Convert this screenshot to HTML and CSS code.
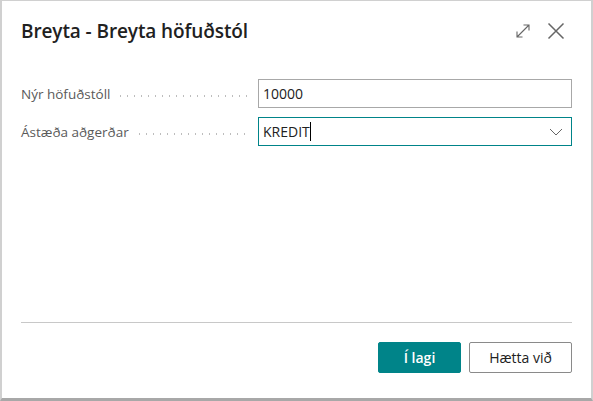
FILE: index.html
```html
<!DOCTYPE html>
<html lang="is">
<head>
<meta charset="utf-8">
<link rel="stylesheet" href="styles.css">
</head>
<body>
<div class="dialog">
  <div class="header">
    <h1 class="title">Breyta - Breyta höfuðstól</h1>
    <div class="header-actions">
      <span class="icon-btn">
        <svg width="16" height="16" viewBox="0 0 16 16"><path d="M2 14 L14 2 M8.5 2 H14 V7.5 M2 8.5 V14 H7.5" fill="none" stroke="#666" stroke-width="1.1"/></svg>
      </span>
      <span class="icon-btn">
        <svg width="18" height="18" viewBox="0 0 18 18"><path d="M1.5 1.5 L16.5 16.5 M16.5 1.5 L1.5 16.5" fill="none" stroke="#666" stroke-width="1.5"/></svg>
      </span>
    </div>
  </div>
  <div class="content">
    <div class="row">
      <label class="label"><span class="label-text">Nýr höfuðstóll</span><span class="dots"></span></label>
      <div class="field">10000</div>
    </div>
    <div class="row">
      <label class="label"><span class="label-text">Ástæða aðgerðar</span><span class="dots"></span></label>
      <div class="field select"><span>KREDIT<span class="caret"></span></span>
        <svg width="14" height="8" viewBox="0 0 14 8"><path d="M1 1 L7 7 L13 1" fill="none" stroke="#666" stroke-width="1"/></svg>
      </div>
    </div>
  </div>
  <div class="footer">
    <button class="btn primary">Í lagi</button>
    <button class="btn">Hætta við</button>
  </div>
</div>
</body>
</html>
```
FILE: styles.css
```css
html, body { margin: 0; padding: 0; }
body {
  width: 593px; height: 401px; overflow: hidden; background: #fff;
  font-family: "Segoe UI", "Open Sans", "Noto Sans", sans-serif;
}
.dialog {
  box-sizing: border-box;
  width: 593px; height: 401px;
  border-top: 1px solid #d0d0d0;
  border-left: 2px solid #d0d0d0;
  border-right: 2px solid #d0d0d0;
  border-bottom: 3px solid #a8a8a8;
  display: flex; flex-direction: column;
  padding: 0 19px 0 19px;
}
.header {
  display: flex; align-items: center; justify-content: space-between;
  height: 59px;
}
.title {
  margin: 0; font-size: 19px; font-weight: 600; color: #212121;
  letter-spacing: -0.1px;
}
.header-actions { display: flex; align-items: center; gap: 16px; margin-right: 7px; }
.icon-btn { display: flex; }
.content { flex: 1; display: flex; flex-direction: column; gap: 9px; padding-top: 19px; }
.row { display: flex; align-items: center; }
.label {
  width: 237px; display: flex; align-items: center;
  font-size: 13.5px; color: #5a5a5a; margin-right: 0;
}
.label-text { white-space: nowrap; }
.dots {
  flex: 1; height: 2px; margin: 4px 9px 0 7px;
  background-image: radial-gradient(circle, #bdbdbd 0.8px, transparent 1px);
  background-size: 7px 2px;
  background-repeat: repeat-x;
}
.field {
  box-sizing: border-box; flex: 1; height: 29px;
  border: 1px solid #a8a8a8; display: flex; align-items: center;
  padding: 0 4px; font-size: 14px; color: #212121;
}
.field.select {
  border-color: #008489; justify-content: space-between; padding-right: 8px;
}
.caret {
  display: inline-block; width: 1px; height: 19px; background: #000;
  vertical-align: -4px;
}
.footer {
  border-top: 1px solid #c8c8c8; height: 76px;
  display: flex; justify-content: flex-end; align-items: flex-start;
  gap: 8px; padding-top: 19px; box-sizing: border-box;
}
.btn {
  font-family: inherit; font-size: 14px; height: 31px;
  background: #fff; border: 1px solid #8a8a8a; color: #212121;
  padding: 0; width: 103px; border-radius: 2px;
}
.btn.primary {
  background: #008489; border-color: #008489; color: #fff; font-weight: 600; width: 83px;
}
```
